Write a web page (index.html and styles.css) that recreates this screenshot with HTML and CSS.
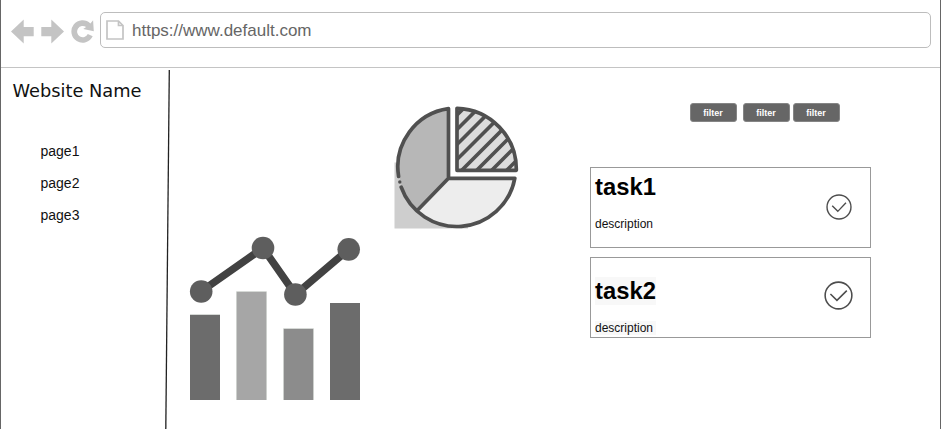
FILE: index.html
```html
<!DOCTYPE html>
<html lang="en">
<head>
<meta charset="utf-8">
<title>Website Name</title>
<link rel="stylesheet" href="styles.css">
</head>
<body>
<div class="window">
  <header class="toolbar">
    <svg class="nav-icons" width="84" height="26" viewBox="11 18 84 26" fill="#c4c4c4">
      <path d="M11 31.500L23.700 19.500V27H33.700V36.300H23.700V43.500Z"/>
      <path d="M64 31.500L51.300 19.500V27H41.300V36.300H51.300V43.500Z"/>
      <path d="M93.100 20.300L93.800 31.200L83.300 28.900L86.100 27.100A5.600 5.600 0 1 0 87.800 34L92.700 36.300A11.200 11.200 0 1 1 90.400 23.500Z"/>
    </svg>
    <div class="address">
      <svg width="18" height="20" viewBox="0 0 18 20" fill="none" stroke="#c4c4c4" stroke-width="1.700">
        <path d="M1 1H12.500L17 5.500V19H1ZM12.500 1V5.500H17"/>
      </svg>
      <span>https://www.default.com</span>
    </div>
  </header>
  <main class="page">
    <aside class="sidebar">
      <div class="menu">
        <h1>Website Name</h1>
        <nav>
          <a>page1</a>
          <a>page2</a>
          <a>page3</a>
        </nav>
      </div>
      <svg class="divider" width="6" height="361" viewBox="165 68 6 361"><path d="M169.300 70L165.800 429" stroke="#222" stroke-width="1.300"/></svg>
    </aside>
    <section class="charts">
      <svg class="trend" width="174" height="166" viewBox="188 236 174 166">
        <path d="M190 314.700H220M236.500 400V291.700H266.500V400M283.500 400V328.700H313.500V400" fill="none" stroke="#cdd0cd"/>
        <path fill="#6c6c6c" d="M190 315H220V400H190ZM330 303H360V400H330Z"/>
        <path fill="#a6a6a6" d="M237 292H266V400H237Z"/>
        <path fill="#8c8c8c" d="M284 329H313V400H284Z"/>
        <path d="M201 291.500L263 248L295.500 294.500L348.700 249.300" fill="none" stroke="#424242" stroke-width="7.500"/>
        <g fill="#5e5e5e">
          <circle cx="201.200" cy="291.500" r="11.300"/>
          <circle cx="263" cy="248" r="11.300"/>
          <circle cx="295.400" cy="294.500" r="11.300"/>
          <circle cx="348.700" cy="249.400" r="11.300"/>
        </g>
      </svg>
      <svg class="pie" width="130" height="130" viewBox="392 102 130 130">
        <defs><clipPath id="quarter"><path d="M457 108.300V170.300H516.300A61 61 0 0 0 457 108.300Z"/></clipPath></defs>
        <path fill="#cecece" d="M394.500 162.500H410L468 225V228.500H394.500Z"/>
        <path fill="#b7b7b7" d="M448.500 108.600A59 59 0 0 0 417.500 210.300L448.500 178.300Z"/>
        <path fill="#ededed" d="M417.500 210.300A59 59 0 0 0 514.800 178.300H448.500Z"/>
        <path fill="#dcdcdc" d="M457 108.300V170.300H516.300A61 61 0 0 0 457 108.300Z"/>
        <g fill="none" stroke="#505050" stroke-width="3.700" stroke-linejoin="round" stroke-linecap="round">
          <path clip-path="url(#quarter)" d="M452 120L469 103M452 134.500L483 103.500M452 149.500L493 108.500M452 164.500L500 116.500M461 171L506.500 125.500M476 171L512 135M491 171L519 143M506 171L521 156"/>
          <path d="M457 108.300V170.300H516.300A61 61 0 0 0 457 108.300Z"/>
          <path d="M514.800 178.300H448.500V108.600A59 59 0 0 0 398.600 176.500M401.200 187.200A59 59 0 0 0 514.800 178.300M448.500 178.300L417.500 210.300"/>
        </g>
        <circle cx="399.800" cy="182" r="1.700" fill="#505050"/>
      </svg>
    </section>
    <section class="tasks">
      <div class="filters">
        <button>filter</button>
        <button>filter</button>
        <button>filter</button>
      </div>
      <article class="task">
        <div class="task-text">
          <h2>task1</h2>
          <p>description</p>
        </div>
        <svg class="check" width="26" height="26" viewBox="0 0 28 28"><circle cx="14" cy="14" r="12.900"/><path d="M6.700 12.700L12.700 18.700L21.500 9.500"/></svg>
      </article>
      <article class="task task-marked">
        <div class="task-text">
          <h2>task2</h2>
          <p>description</p>
        </div>
        <svg class="check" width="29" height="29" viewBox="0 0 28 28"><circle cx="14" cy="14" r="12.900"/><path d="M6.200 12.500L12.500 18.700L22 9.300"/></svg>
      </article>
    </section>
  </main>
</div>
</body>
</html>
```

FILE: styles.css
```css
* { box-sizing: border-box; }
body {
  margin: 0;
  background: #fff;
  color: #111;
  font-family: "Liberation Sans", Arial, sans-serif;
}
svg { display: block; flex: none; }
h1, h2, p { margin: 0; }
.window {
  width: 941px;
  height: 429px;
  overflow: hidden;
  border: solid #666;
  border-width: 0 1px;
}
.toolbar {
  display: flex;
  height: 68px;
  padding: 12px 9px 0 10px;
  border-bottom: 1px solid #c4c4c4;
}
.nav-icons { margin: 6px 5px 0 0; }
.address {
  display: flex;
  flex: 1;
  align-items: center;
  gap: 8px;
  height: 36px;
  padding-left: 5px;
  border: 1px solid #bdbdbd;
  border-radius: 5px;
  color: #666;
  font-size: 17px;
}
.address span { padding-top: 2px; }
.page { display: flex; height: 361px; }
.sidebar {
  display: flex;
  justify-content: space-between;
  width: 170px;
}
.menu { padding: 12px 0 0 11.5px; }
h1 {
  font: 17.8px/22px "DejaVu Sans", sans-serif;
  white-space: nowrap;
}
nav {
  display: flex;
  flex-direction: column;
  margin: 33px 0 0 28px;
  font-size: 14px;
  line-height: 32px;
}
.charts {
  display: flex;
  align-items: flex-start;
  gap: 30px;
  width: 419px;
  padding-left: 17px;
}
.trend { margin-top: 168px; }
.pie { margin-top: 34px; }
.tasks { width: 281px; padding-top: 35px; }
.filters {
  display: flex;
  gap: 3px;
  margin: 0 0 45px 100px;
}
.filters button {
  width: 47px;
  height: 19px;
  padding: 0 1px 0 0;
  border: 1px solid #858585;
  border-radius: 3px;
  background: #666;
  color: #fff;
  font: bold 9px "Liberation Sans", sans-serif;
}
.filters button:first-child { margin-right: 3px; }
.task {
  display: flex;
  justify-content: space-between;
  height: 81px;
  margin-bottom: 9px;
  padding: 5px 18px 0 4px;
  border: 1px solid #999;
}
.task h2 {
  color: #000;
  font-size: 23.8px;
  line-height: 28px;
}
.task p {
  margin-top: 16px;
  font-size: 12px;
  line-height: 14px;
}
.task .check { margin-top: 21px; }
.task-marked { padding: 19px 17px 0 4px; }
.task-marked h2, .task-marked p { background: #f8f8f8; }
.task-marked .check { margin-top: 4px; }
.check {
  fill: none;
  stroke: #4d4d4d;
  stroke-width: 1.500;
}
```
